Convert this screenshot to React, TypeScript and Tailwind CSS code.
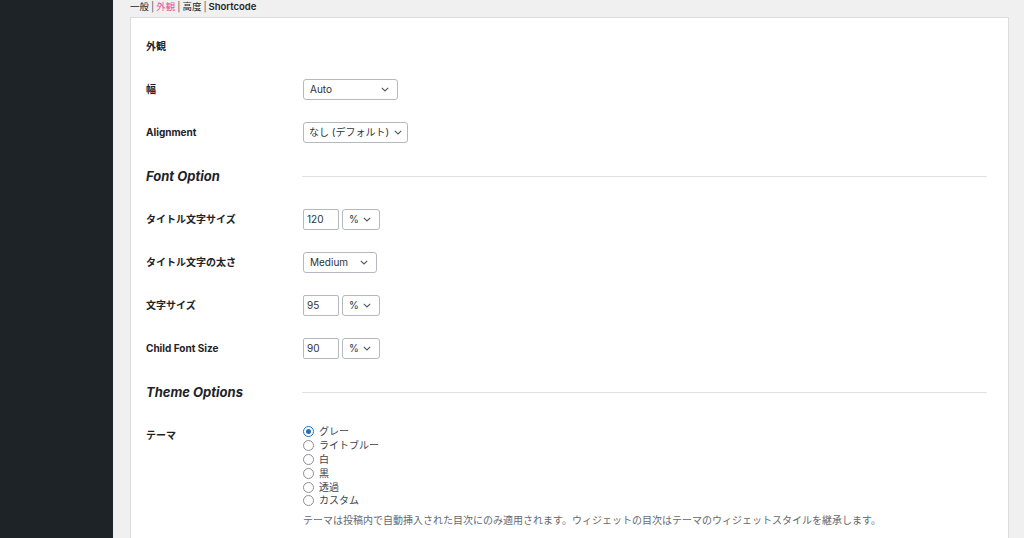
import React from "react";

const font = { fontFamily: 'Inter, "Noto Sans CJK JP", sans-serif' };

function Chevron() {
  return (
    <svg width="8" height="5" viewBox="0 0 8 5" className="shrink-0">
      <path d="M0.8 0.8 L4 4 L7.2 0.8" fill="none" stroke="#50575e" strokeWidth="1.1" />
    </svg>
  );
}

function Select({ value, w, pl = "pl-[6px]", pr = "pr-[8px]" }: { value: string; w: string; pl?: string; pr?: string }) {
  return (
    <div
      className={`${w} ${pl} ${pr} h-[21px] flex items-center justify-between border border-[#b5b8bc] rounded-[3px] bg-white text-[10px] text-[#2c3338]`}
    >
      <span className="whitespace-nowrap">{value}</span>
      <Chevron />
    </div>
  );
}

function NumInput({ value }: { value: string }) {
  return (
    <div className="w-[36px] h-[21px] flex items-center pl-[3px] border border-[#b5b8bc] rounded-[2px] bg-white text-[10px] text-[#2c3338]">
      {value}
    </div>
  );
}

function Row({ label, children }: { label: string; children?: React.ReactNode }) {
  return (
    <div className="flex items-center h-[43px]">
      <div className="w-[157px] shrink-0 text-[10px] font-bold text-[#1d2327]">{label}</div>
      <div className="flex items-center gap-[3px]">{children}</div>
    </div>
  );
}

function Section({ title }: { title: string }) {
  return (
    <div className="flex items-center h-[44px]">
      <div className="w-[156px] shrink-0 text-[13px] font-bold italic text-[#1d2327] pt-[2px]">{title}</div>
      <div className="flex-1 h-px bg-[#e0e0e2]" />
    </div>
  );
}

function Radio({ label, checked }: { label: string; checked?: boolean }) {
  return (
    <div className="flex items-center h-[13.8px] text-[10px] text-[#3c434a]">
      <div
        className={`w-[11px] h-[11px] rounded-full border flex items-center justify-center mr-[5px] bg-white ${
          checked ? "border-[#2271b1]" : "border-[#8c8f94]"
        }`}
      >
        {checked && <div className="w-[5px] h-[5px] rounded-full bg-[#2271b1]" />}
      </div>
      <span>{label}</span>
    </div>
  );
}

export default function App() {
  return (
    <div className="w-[1024px] h-[538px] overflow-hidden flex bg-[#f0f0f1]" style={font}>
      <div className="w-[113px] shrink-0 bg-[#1d2327]" />
      <div className="flex-1 pl-[17px] pr-[15px] flex flex-col">
        <div className="h-[17px] shrink-0 flex items-start pt-px text-[9.5px] leading-[12px] text-[#1d2327]">
          <span>一般</span>
          <span className="mx-[2px] text-[#50575e]">|</span>
          <span className="text-[#e05297]">外観</span>
          <span className="mx-[2px] text-[#50575e]">|</span>
          <span>高度</span>
          <span className="mx-[2px] text-[#50575e]">|</span>
          <span className="font-semibold">Shortcode</span>
        </div>
        <div className="h-[600px] shrink-0 bg-white border border-[#dcdcde] pl-[15px] pr-[21px] pt-[7px]">
          <Row label="外観" />
          <Row label="幅">
            <Select value="Auto" w="w-[95px]" />
          </Row>
          <Row label="Alignment">
            <Select value="なし (デフォルト)" w="w-[105px]" pl="pl-[5px]" pr="pr-[5px]" />
          </Row>
          <Section title="Font Option" />
          <Row label="タイトル文字サイズ">
            <NumInput value="120" />
            <Select value="%" w="w-[38px]" />
          </Row>
          <Row label="タイトル文字の太さ">
            <Select value="Medium" w="w-[74px]" />
          </Row>
          <Row label="文字サイズ">
            <NumInput value="95" />
            <Select value="%" w="w-[38px]" />
          </Row>
          <Row label="Child Font Size">
            <NumInput value="90" />
            <Select value="%" w="w-[38px]" />
          </Row>
          <Section title="Theme Options" />
          <div className="flex pt-[11px]">
            <div className="w-[157px] shrink-0 text-[10px] font-bold text-[#1d2327] pt-[3px]">テーマ</div>
            <div className="flex flex-col">
              <Radio label="グレー" checked />
              <Radio label="ライトブルー" />
              <Radio label="白" />
              <Radio label="黒" />
              <Radio label="透過" />
              <Radio label="カスタム" />
              <div className="mt-[5px] text-[10px] text-[#646970] whitespace-nowrap">
                テーマは投稿内で自動挿入された目次にのみ適用されます。ウィジェットの目次はテーマのウィジェットスタイルを継承します。
              </div>
            </div>
          </div>
        </div>
      </div>
    </div>
  );
}
